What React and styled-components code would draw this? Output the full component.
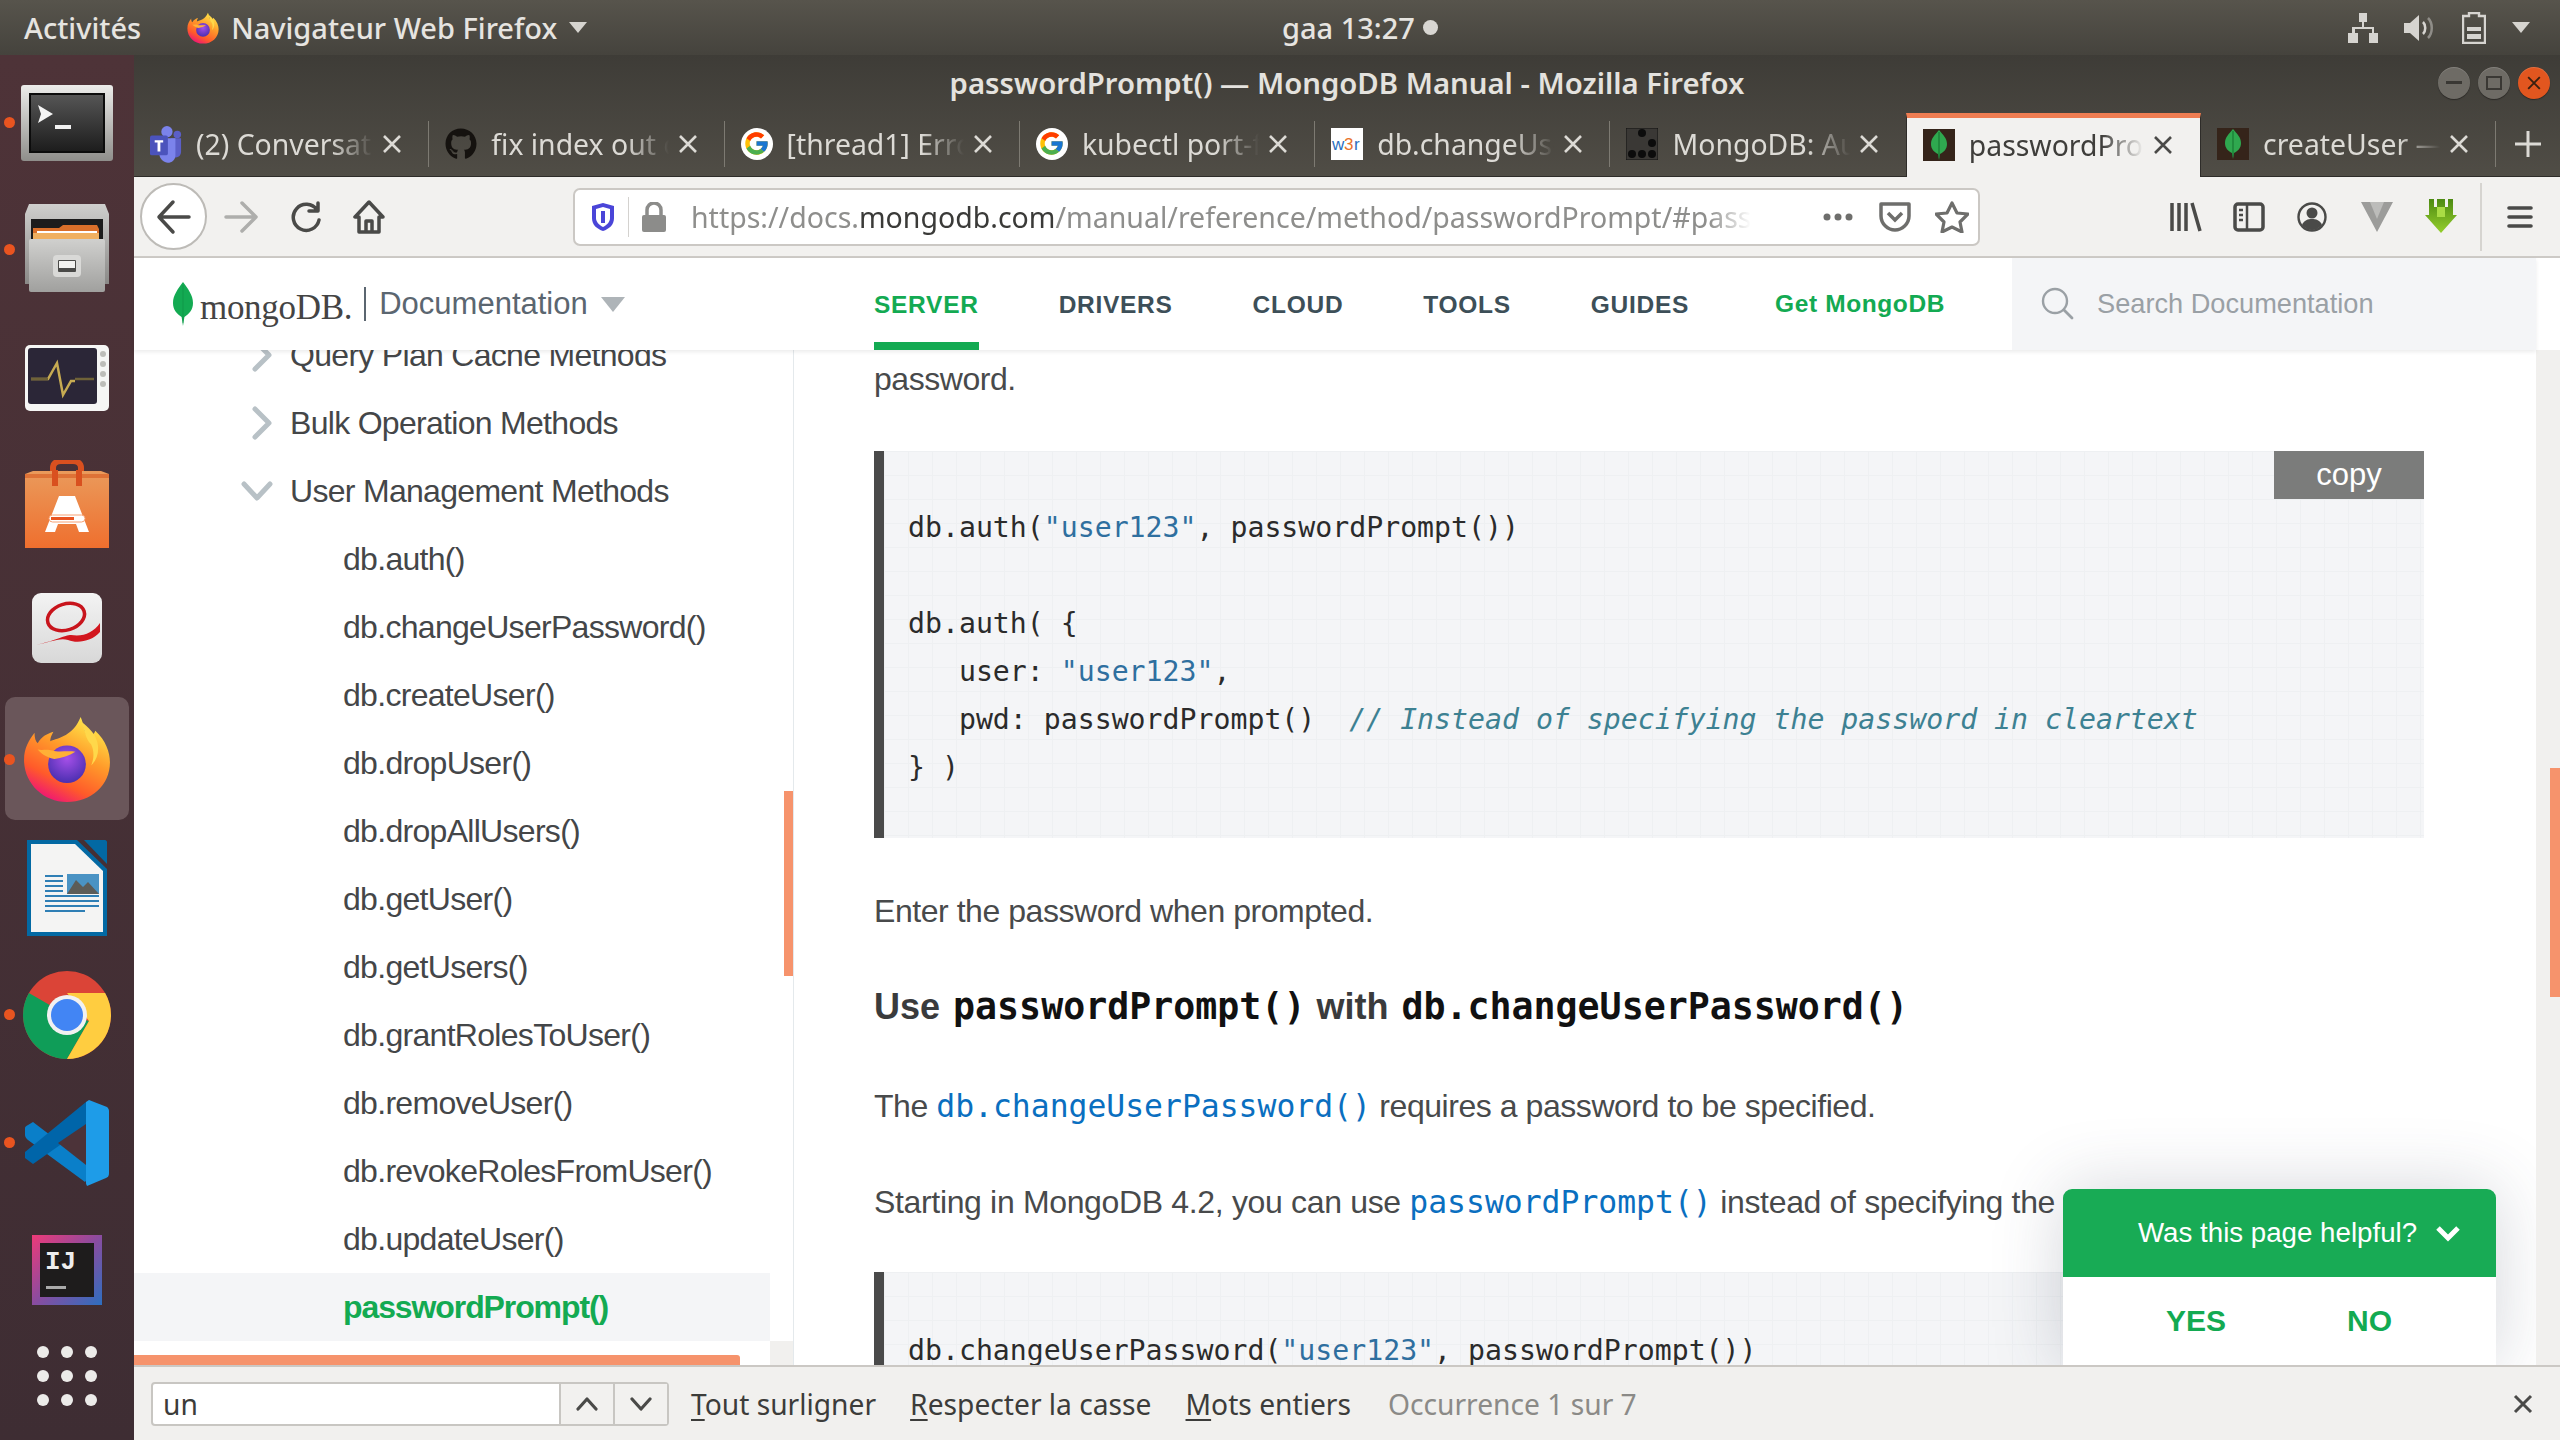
import styled, { createGlobalStyle } from "styled-components";
import { FaGithub } from "react-icons/fa";
import { FcGoogle } from "react-icons/fc";

const UI_FONT = `"Noto Sans", "DejaVu Sans", sans-serif`;
const PAGE_FONT = `"Liberation Sans", Arial, sans-serif`;
const MONO_FONT = `"DejaVu Sans Mono", "Liberation Mono", monospace`;

const GlobalStyle = createGlobalStyle`
  html, body {
    margin: 0;
    padding: 0;
    width: 2560px;
    height: 1440px;
    overflow: hidden;
    background: #fff;
  }
  * {
    box-sizing: border-box;
  }
`;

const Screen = styled.div`
  width: 2560px;
  height: 1440px;
  display: flex;
  flex-direction: column;
  overflow: hidden;
`;

/* ---------- gnome top bar ---------- */

const TopBar = styled.div`
  height: 55px;
  flex: none;
  display: grid;
  grid-template-columns: 1282px auto 1fr;
  align-items: center;
  background: linear-gradient(#57544c, #45433d);
  color: #e6e4e0;
  font-family: ${UI_FONT};
  font-size: 29px;
  font-weight: 500;
`;

const TopLeft = styled.div`
  display: flex;
  align-items: center;
  padding-left: 24px;
`;

const AppMenu = styled.div`
  display: flex;
  align-items: center;
  gap: 12px;
  margin-left: 46px;
`;

const Caret = styled.span`
  width: 0;
  height: 0;
  border-left: ${(p) => p.$size || 9}px solid transparent;
  border-right: ${(p) => p.$size || 9}px solid transparent;
  border-top: ${(p) => (p.$size ? p.$size + 3 : 11)}px solid ${(p) => p.$color || "#d6d4cf"};
`;

const Clock = styled.div`
  display: flex;
  align-items: center;
  gap: 8px;
`;

const Dot = styled.span`
  width: 15px;
  height: 15px;
  border-radius: 50%;
  background: #d8d6d2;
`;

const TopRight = styled.div`
  display: flex;
  align-items: center;
  justify-content: flex-end;
  gap: 26px;
  padding-right: 30px;
`;

/* ---------- dock ---------- */

const Main = styled.div`
  flex: 1;
  min-height: 0;
  display: flex;
`;

const Dock = styled.div`
  width: 134px;
  flex: none;
  padding-top: 4px;
  display: flex;
  flex-direction: column;
  background: linear-gradient(#4e3338, #3e2d33);
`;

const DockCell = styled.div`
  position: relative;
  flex: none;
  height: 127.5px;
  padding-bottom: ${(p) => p.$up || 0}px;
  display: flex;
  align-items: center;
  justify-content: center;
  &::before {
    content: "";
    display: ${(p) => (p.$running ? "block" : "none")};
    position: absolute;
    left: 4px;
    top: 50%;
    width: 11px;
    height: 11px;
    margin-top: -6px;
    border-radius: 50%;
    background: #e95420;
  }
`;

const DockActive = styled.div`
  width: 124px;
  height: 123px;
  display: flex;
  align-items: center;
  justify-content: center;
  border-radius: 10px;
  background: #6a565a;
`;

const DockGrid = styled.div`
  flex: none;
  height: 84px;
  display: grid;
  grid-template-columns: repeat(3, 12px);
  grid-auto-rows: 12px;
  gap: 12px;
  align-content: center;
  justify-content: center;
  span {
    border-radius: 50%;
    background: #ecebe9;
  }
`;

/* ---------- firefox window ---------- */

const Window = styled.div`
  flex: 1;
  min-width: 0;
  display: flex;
  flex-direction: column;
`;

const Chrome = styled.div`
  flex: none;
  height: 122px;
  background: linear-gradient(#3e3c37, #504d46);
  display: flex;
  flex-direction: column;
`;

const TitleRow = styled.div`
  height: 56px;
  flex: none;
  position: relative;
  display: flex;
  align-items: center;
  justify-content: center;
  color: #e4e2de;
  font-family: ${UI_FONT};
  font-size: 29.3px;
  font-weight: 600;
`;

const WindowButtons = styled.div`
  position: absolute;
  right: 10px;
  top: 12px;
  display: flex;
  gap: 8px;
`;

const WindowButton = styled.div`
  width: 32px;
  height: 32px;
  border-radius: 50%;
  display: flex;
  align-items: center;
  justify-content: center;
  background: ${(p) => (p.$close ? "#e2561f" : "#6e6b65")};
  box-shadow: inset 0 1px 0 rgba(255, 255, 255, 0.15), 0 1px 1px #2c2a27;
`;

const TabStrip = styled.div`
  flex: 1;
  display: flex;
  border-bottom: 1px solid #2e2c29;
`;

const Tab = styled.div`
  position: relative;
  flex: none;
  width: 295.3px;
  display: flex;
  align-items: center;
  padding: 0 26px 0 16px;
  color: ${(p) => (p.$active ? "#3f3e3b" : "#dcdad5")};
  background: ${(p) => (p.$active ? "#f2f1ef" : "transparent")};
  font-family: ${UI_FONT};
  font-size: 28.4px;
  ${(p) =>
    p.$active
      ? `
    margin-top: 2px;
    margin-bottom: -1px;
    padding-bottom: 6px;
    border: 1px solid #2e2c29;
    border-bottom: none;
    border-top: 5px solid #ef7d52;
  `
      : `
    &::after {
      content: "";
      display: ${p.$noSep ? "none" : "block"};
      position: absolute;
      right: 0;
      top: 10px;
      bottom: 9px;
      width: 1px;
      background: #7d7a72;
    }
  `}
`;

const TabIcon = styled.span`
  flex: none;
  width: 32px;
  height: 32px;
  display: flex;
  align-items: center;
  justify-content: center;
`;

const GoogleBadge = styled.span`
  width: 32px;
  height: 32px;
  border-radius: 50%;
  background: #fff;
  display: flex;
  align-items: center;
  justify-content: center;
`;

const TabLabel = styled.span`
  flex: 1;
  min-width: 0;
  margin: 0 8px 0 14px;
  white-space: nowrap;
  overflow: hidden;
  -webkit-mask-image: linear-gradient(to right, #000 76%, transparent 100%);
  mask-image: linear-gradient(to right, #000 76%, transparent 100%);
`;

const NewTab = styled.div`
  flex: 1;
  display: flex;
  align-items: center;
  justify-content: center;
`;

const Toolbar = styled.div`
  flex: none;
  height: 81px;
  display: flex;
  align-items: center;
  background: #f2f1ef;
  border-bottom: 2px solid #cdcac6;
`;

const BackButton = styled.div`
  width: 67px;
  height: 67px;
  margin-left: 6px;
  border-radius: 50%;
  background: #fff;
  border: 2px solid #bdbbb7;
  display: flex;
  align-items: center;
  justify-content: center;
`;

const ToolIcon = styled.div`
  flex: none;
  width: ${(p) => p.$w || 63}px;
  display: flex;
  align-items: center;
  justify-content: center;
`;

const UrlBar = styled.div`
  width: 1407px;
  height: 58px;
  margin-left: 173px;
  flex: none;
  display: flex;
  align-items: center;
  background: #fff;
  border: 2px solid #cbc8c4;
  border-radius: 7px;
  font-family: ${UI_FONT};
  font-size: 28.5px;
  color: #8e8e8c;
`;

const UrlDivider = styled.span`
  width: 1px;
  height: 40px;
  background: #d4d2cf;
  margin: 0 12px 0 13px;
`;

const UrlText = styled.div`
  width: 1060px;
  flex: none;
  margin-left: 24px;
  white-space: nowrap;
  overflow: hidden;
  -webkit-mask-image: linear-gradient(to right, #000 96%, transparent 100%);
  mask-image: linear-gradient(to right, #000 96%, transparent 100%);
  b {
    font-weight: 400;
    color: #3a3a38;
  }
`;

const UrlActions = styled.div`
  display: flex;
  align-items: center;
  margin-left: 72px;
  gap: 24px;
`;

const ToolRight = styled.div`
  display: flex;
  align-items: center;
  margin-left: 190px;
  gap: 28px;
`;

const ToolDivider = styled.span`
  width: 2px;
  height: 68px;
  background: #d6d4d0;
  margin: 0 -3px 0 -5px;
`;

/* ---------- mongodb page ---------- */

const Page = styled.div`
  position: relative;
  flex: 1;
  min-height: 0;
  display: flex;
  flex-direction: column;
  background: #fff;
`;

const Header = styled.div`
  position: relative;
  z-index: 3;
  flex: none;
  height: 92px;
  display: flex;
  align-items: stretch;
  margin-right: 24px;
  background: #fff;
  box-shadow: 0 2px 4px rgba(0, 0, 0, 0.08);
`;

const Logo = styled.div`
  width: 740px;
  flex: none;
  display: flex;
  align-items: center;
  padding-left: 39px;
  color: #5b6670;
`;

const LogoWord = styled.span`
  margin-left: 7px;
  font-family: "Liberation Serif", serif;
  font-size: 35px;
  color: #444;
  position: relative;
  top: 4px;
  letter-spacing: -0.3px;
`;

const LogoDivider = styled.span`
  width: 2px;
  height: 34px;
  background: #5b6670;
  margin: 0 13px 0 12px;
`;

const LogoDocs = styled.span`
  font-family: ${PAGE_FONT};
  font-size: 31px;
  margin-right: 13px;
`;

const Nav = styled.div`
  display: flex;
  align-items: stretch;
  gap: 80px;
`;

const NavItem = styled.div`
  display: flex;
  align-items: center;
  padding-top: 2px;
  border-bottom: 8px solid ${(p) => (p.$active ? "#13aa52" : "transparent")};
  border-top: 8px solid transparent;
  font-family: ${PAGE_FONT};
  font-size: 24.5px;
  font-weight: 700;
  letter-spacing: 0.72px;
  color: ${(p) => (p.$green ? "#13aa52" : "#3d4f58")};
`;

const GetMongo = styled(NavItem)`
  margin-left: 6px;
  letter-spacing: 0.6px;
  padding-bottom: 3px;
`;

const Search = styled.div`
  margin-left: 67px;
  flex: 1;
  display: flex;
  align-items: center;
  padding-left: 28px;
  gap: 21px;
  background: #f4f5f7;
  font-family: ${PAGE_FONT};
  font-size: 27.2px;
  color: #9aa0a5;
`;

const Body = styled.div`
  flex: 1;
  min-height: 0;
  display: flex;
`;

const Sidebar = styled.div`
  position: relative;
  width: 660px;
  flex: none;
  overflow: hidden;
  border-right: 1px solid #e4e9ec;
  font-family: ${PAGE_FONT};
  font-size: 32px;
  letter-spacing: -0.7px;
  color: #444648;
`;

const NavList = styled.div`
  margin-top: -29px;
  width: 636px;
`;

const SideRow = styled.div`
  height: 68px;
  display: flex;
  align-items: center;
  position: relative;
  padding-left: ${(p) => (p.$level === 2 ? 209 : 156)}px;
  background: ${(p) => (p.$active ? "#f4f5f7" : "transparent")};
  color: ${(p) => (p.$active ? "#13aa52" : "inherit")};
  font-weight: ${(p) => (p.$active ? 700 : 400)};
  letter-spacing: ${(p) => (p.$active ? "-1.1px" : "inherit")};
`;

const Chevron = styled.span`
  position: absolute;
  left: 107px;
  top: 50%;
  transform: translateY(-50%);
  display: flex;
`;

const SideScrollV = styled.div`
  position: absolute;
  right: 0;
  top: 441px;
  width: 9px;
  height: 185px;
  background: #f6936c;
`;

const SideCorner = styled.div`
  position: absolute;
  right: 0;
  bottom: 0;
  width: 23px;
  height: 24px;
  background: #f1f0ee;
`;

const SideScrollH = styled.div`
  position: absolute;
  left: 0;
  bottom: 0;
  width: 606px;
  height: 10px;
  border-top-right-radius: 3px;
  background: #f6936c;
`;

const Content = styled.div`
  position: relative;
  flex: 1;
  min-width: 0;
  overflow: hidden;
  padding: 7px 0 0 80px;
  font-family: ${PAGE_FONT};
  font-size: 32px;
  letter-spacing: -0.45px;
  color: #484a4b;
`;

const Para = styled.p`
  margin: 0 0 ${(p) => p.$after || 0}px;
  line-height: 44px;
  letter-spacing: ${(p) => p.$spacing || "inherit"};
  white-space: nowrap;
`;

const Heading = styled.h3`
  margin: 0 0 53px;
  line-height: 48px;
  font-size: 36px;
  font-weight: 700;
  color: #3a3b3c;
  letter-spacing: 0;
  white-space: nowrap;
  code {
    margin: 0 1px 0 3px;
    font-family: ${MONO_FONT};
    font-weight: 700;
    font-size: 36.6px;
    color: #111;
  }
`;

const InlineLink = styled.a`
  font-family: ${MONO_FONT};
  font-size: 31.4px;
  color: #0a6fc0;
  text-decoration: none;
  letter-spacing: 0;
`;

const CodeBlock = styled.div`
  position: relative;
  width: 1550px;
  height: ${(p) => p.$height}px;
  margin: ${(p) => p.$top}px 0 ${(p) => p.$after || 0}px;
  padding: ${(p) => p.$pad}px 0 0 24px;
  border-left: 10px solid #4a4a4a;
  background-color: #f4f5f7;
  background-image:
    linear-gradient(to right, #eef0f2 1px, transparent 1px),
    linear-gradient(to bottom, #eef0f2 1px, transparent 1px);
  background-size: 24px 24px;
  font-family: ${MONO_FONT};
  font-size: 28.2px;
  letter-spacing: 0;
  line-height: 48px;
  color: #2b2b2b;
  white-space: pre;
`;

const CopyButton = styled.div`
  position: absolute;
  top: 0;
  right: 0;
  width: 150px;
  height: 48px;
  display: flex;
  align-items: center;
  justify-content: center;
  background: #7b7c7b;
  font-family: ${PAGE_FONT};
  font-size: 31px;
  color: #fff;
`;

const Str = styled.span`
  color: #2f6f9f;
`;

const Comment = styled.span`
  color: #3d8192;
  font-style: italic;
`;

const PageGutter = styled.div`
  position: relative;
  width: 24px;
  flex: none;
  background: #f1f0ee;
`;

const PageThumb = styled.div`
  position: absolute;
  right: 0;
  top: 418px;
  width: 10px;
  height: 229px;
  background: #f6936c;
`;

const Feedback = styled.div`
  position: absolute;
  z-index: 4;
  top: 839px;
  left: 1269px;
  width: 433px;
  height: 177px;
  border-radius: 9px 9px 0 0;
  background: #fff;
  box-shadow: 0 0 70px rgba(60, 70, 90, 0.22);
  font-family: ${PAGE_FONT};
  letter-spacing: 0;
`;

const FeedbackHead = styled.div`
  height: 88px;
  display: flex;
  align-items: center;
  padding-left: 75px;
  gap: 18px;
  border-radius: 9px 9px 0 0;
  background: #18ab55;
  color: #fff;
  font-size: 27.7px;
`;

const FeedbackBody = styled.div`
  height: 88px;
  display: flex;
  align-items: center;
  padding-left: 103px;
  gap: 121px;
  color: #13aa52;
  font-size: 30px;
  font-weight: 700;
`;

/* ---------- find bar ---------- */

const FindBar = styled.div`
  flex: none;
  height: 75px;
  display: flex;
  align-items: center;
  padding-left: 17px;
  background: #f1f0ee;
  border-top: 2px solid #cbc8c4;
  font-family: ${UI_FONT};
  font-size: 28.2px;
  color: #3c3c3a;
  position: relative;
`;

const FindInput = styled.div`
  width: 518px;
  height: 44px;
  flex: none;
  display: flex;
  border: 2px solid #c8c6c2;
  border-radius: 4px;
  background: #fff;
`;

const FindValue = styled.div`
  flex: 1;
  display: flex;
  align-items: center;
  padding-left: 10px;
`;

const FindStep = styled.div`
  width: 54px;
  flex: none;
  display: flex;
  align-items: center;
  justify-content: center;
  border-left: 2px solid #c8c6c2;
  background: #f2f1ef;
`;

const FindLabel = styled.span`
  margin-left: ${(p) => p.$gap}px;
  color: ${(p) => (p.$muted ? "#8b8a87" : "inherit")};
  white-space: nowrap;
  u {
    text-underline-offset: 4px;
  }
`;

const FindClose = styled.div`
  margin-left: auto;
  margin-right: 26px;
  display: flex;
`;

/* ---------- drawings ---------- */

const Leaf = ({ w = 20, h = 44, fill = "#13aa52" }) => (
  <svg width={w} height={h} viewBox="0 0 20 44">
    <path d="M10 0C5 7 0 13 0 21c0 7 4 11 8.6 14L10 44l1.4-9C16 32 20 28 20 21 20 13 15 7 10 0z" fill={fill} />
    <path d="M10 3v38" stroke="#0d7f3d" strokeWidth="0.8" opacity="0.5" />
  </svg>
);

const MongoFav = () => (
  <svg width="32" height="32" viewBox="0 0 32 32">
    <rect width="32" height="32" fill="#35241a" />
    <path d="M16 1c-4 5-8 8-8 14 0 5 3 8 7 10l1 6 1-6c4-2 7-5 7-10 0-6-4-9-8-14z" fill="#2fa84f" />
    <path d="M16 3v25" stroke="#14702f" strokeWidth="1" />
  </svg>
);

const TeamsFav = () => (
  <svg width="34" height="40" viewBox="0 0 34 40">
    <circle cx="18" cy="7" r="6" fill="#7b83eb" />
    <circle cx="29" cy="10" r="4" fill="#5b5fc7" />
    <path d="M22 14h11v14c0 5-4 7-7 6z" fill="#5b5fc7" />
    <path d="M10 14h17v18c0 5-4 8-8 8s-9-4-9-9z" fill="#7b83eb" />
    <rect x="0" y="11" width="19" height="21" rx="2" fill="#4b53bc" />
    <path d="M5 16h9v2.5h-3V28H8v-9.5H5z" fill="#fff" />
  </svg>
);

const W3Fav = () => (
  <svg width="32" height="32" viewBox="0 0 32 32">
    <rect width="32" height="32" fill="#fff" />
    <text x="1" y="22" fontFamily="Liberation Sans, sans-serif" fontSize="17" fill="#2b6fc0">w</text>
    <text x="13" y="22" fontFamily="Liberation Sans, sans-serif" fontSize="17" fill="#e8722c">3</text>
    <text x="23" y="22" fontFamily="Liberation Sans, sans-serif" fontSize="17" fill="#2b6fc0">r</text>
  </svg>
);

const MongoAuFav = () => (
  <svg width="32" height="32" viewBox="0 0 32 32">
    <rect width="32" height="32" fill="#3a3835" stroke="#111" />
    <circle cx="16" cy="5" r="4" fill="#0c0c0c" />
    <circle cx="26" cy="15" r="4" fill="#0c0c0c" />
    <circle cx="6" cy="26" r="4" fill="#0c0c0c" />
    <circle cx="16" cy="26" r="4" fill="#0c0c0c" />
    <circle cx="26" cy="26" r="4" fill="#0c0c0c" />
  </svg>
);

const FirefoxIcon = ({ size = 84 }) => (
  <svg width={size} height={size} viewBox="0 0 84 84">
    <defs>
      <linearGradient id={`ffA${size}`} x1="0.8" y1="0.05" x2="0.3" y2="1">
        <stop offset="0" stopColor="#ffe94a" />
        <stop offset="0.4" stopColor="#ff9a2a" />
        <stop offset="0.75" stopColor="#ff5a2a" />
        <stop offset="1" stopColor="#ee1279" />
      </linearGradient>
      <radialGradient id={`ffB${size}`} cx="0.5" cy="0.35" r="0.65">
        <stop offset="0" stopColor="#a54fe8" />
        <stop offset="1" stopColor="#4a2fb0" />
      </radialGradient>
    </defs>
    <path d="M55 2c4 9 2 13 8 20 3-2 5-4 6-7 10 9 14 21 14 30 0 22-18 38-41 38S1 65 1 43C1 31 6 24 11 17c0 5 1 8 3 10 4-7 9-9 15-11-2 4-3 6-3 9 8-3 22-5 29-23z" fill={`url(#ffA${size})`} />
    <circle cx="42" cy="47" r="18" fill={`url(#ffB${size})`} />
    <path d="M14 33c6 1 9-1 14 1 6 2 13 0 22 1-6 4-13 6-20 7-6-1-12-4-16-9z" fill="#ffb036" />
    <path d="M55 6c5 10 4 16 10 22 3 6 3 14 0 20 6-5 8-14 6-22-2-8-8-14-16-20z" fill="#ffd84a" />
  </svg>
);

const Terminal = () => (
  <svg width="92" height="76" viewBox="0 0 92 76">
    <defs>
      <linearGradient id="termBody" x1="0" y1="0" x2="0" y2="1">
        <stop offset="0" stopColor="#ececea" />
        <stop offset="1" stopColor="#8f8e8b" />
      </linearGradient>
      <linearGradient id="termScreen" x1="0" y1="0" x2="0" y2="1">
        <stop offset="0" stopColor="#555" />
        <stop offset="1" stopColor="#1d1d1d" />
      </linearGradient>
    </defs>
    <rect width="92" height="76" rx="3" fill="url(#termBody)" />
    <rect x="8" y="8" width="76" height="60" fill="#0c0c0c" />
    <rect x="10" y="10" width="72" height="56" fill="url(#termScreen)" />
    <path d="M17 20l15 9-15 9 3-9z" fill="#f4f4f4" />
    <rect x="34" y="40" width="16" height="4" fill="#f0f0f0" />
  </svg>
);

const Cabinet = () => (
  <svg width="84" height="88" viewBox="0 0 84 88">
    <defs>
      <linearGradient id="cabTop" x1="0" y1="0" x2="0" y2="1">
        <stop offset="0" stopColor="#cfcfcd" />
        <stop offset="1" stopColor="#8a8987" />
      </linearGradient>
      <linearGradient id="cabFront" x1="0" y1="0" x2="0" y2="1">
        <stop offset="0" stopColor="#d0d0ce" />
        <stop offset="1" stopColor="#a0a09e" />
      </linearGradient>
    </defs>
    <path d="M4 0h76l4 10v70H0V10z" fill="url(#cabTop)" />
    <rect x="6" y="15" width="72" height="30" fill="#1c1c1c" />
    <path d="M8 24h26l4-3h34l2 4v16H8z" fill="#d96f2a" />
    <rect x="8" y="29" width="66" height="14" fill="#f0b060" />
    <rect x="12" y="27" width="60" height="2" fill="#fff" />
    <rect x="4" y="35" width="76" height="53" rx="2" fill="url(#cabFront)" />
    <rect x="28" y="51" width="28" height="22" rx="4" fill="#d9d9d7" />
    <rect x="33" y="56" width="18" height="12" rx="1" fill="#4a4a48" />
    <rect x="34" y="57" width="16" height="7" fill="#f2f2f0" />
  </svg>
);

const Monitor = () => (
  <svg width="84" height="66" viewBox="0 0 84 66">
    <rect width="84" height="66" rx="5" fill="#f6f6f5" />
    <rect x="3" y="3" width="69" height="56" rx="3" fill="#2b2637" />
    <path d="M6 34h17l9-16 6 32 8-14h4" fill="none" stroke="#c7ab52" strokeWidth="2.5" />
    <path d="M6 34h17" stroke="#6f6238" strokeWidth="2.5" />
    <path d="M50 34h19" stroke="#6f6238" strokeWidth="2.5" />
    <circle cx="78" cy="9" r="3" fill="#bdbdb9" />
    <circle cx="78" cy="19" r="3" fill="#bdbdb9" />
    <circle cx="78" cy="29" r="3" fill="#bdbdb9" />
    <circle cx="78" cy="39" r="3" fill="#bdbdb9" />
  </svg>
);

const Store = () => (
  <svg width="84" height="90" viewBox="0 0 84 90">
    <defs>
      <linearGradient id="bag" x1="0" y1="0" x2="0" y2="1">
        <stop offset="0" stopColor="#ea9a5b" />
        <stop offset="1" stopColor="#ef6f2e" />
      </linearGradient>
    </defs>
    <path d="M28 14V8c0-5 4-7 8-7h12c4 0 8 2 8 7v6" fill="none" stroke="#d9501f" strokeWidth="6" />
    <path d="M0 14l8-3h68l8 3v74H0z" fill="url(#bag)" />
    <path d="M0 14h84v4H0z" fill="#d9622a" opacity="0.7" />
    <rect x="27" y="10" width="6" height="16" fill="#d9501f" />
    <rect x="51" y="10" width="6" height="16" fill="#d9501f" />
    <path d="M34 36h16l14 36h-10l-3-8H33l-3 8H20z" fill="#fff" />
    <rect x="24" y="55" width="36" height="7" rx="3.5" fill="#fff" stroke="#f7a072" />
    <rect x="26" y="57" width="23" height="3" fill="#e95420" />
  </svg>
);

const MailIcon = () => (
  <svg width="70" height="70" viewBox="0 0 70 70">
    <defs>
      <linearGradient id="mailBg" x1="0" y1="0" x2="0" y2="1">
        <stop offset="0" stopColor="#f3f3f3" />
        <stop offset="1" stopColor="#d8d8d8" />
      </linearGradient>
    </defs>
    <rect width="70" height="70" rx="9" fill="url(#mailBg)" />
    <ellipse cx="34" cy="24" rx="19" ry="13" fill="none" stroke="#c8141c" strokeWidth="3.5" transform="rotate(-18 34 24)" />
    <path d="M3 52c20-4 30-10 36-10 12 2 22-2 29-12v9c-8 9-22 12-32 8-8-3-20 3-33 5z" fill="#d2161e" />
  </svg>
);

const WriterIcon = () => (
  <svg width="80" height="96" viewBox="0 0 80 96">
    <path d="M0 0h50l30 29v67H0z" fill="#0369a3" />
    <path d="M57 0h21c1 0 2 1 2 2v22z" fill="#0369a3" />
    <path d="M4 4h44l28 27v61H4z" fill="#f4f4f3" />
    <rect x="40" y="34" width="32" height="20" fill="#4a93c4" />
    <path d="M40 54l9-14 7 7 5-5 11 12z" fill="#5c5c58" />
    <path d="M18 36h18M18 41h18M18 46h18M18 51h18M18 56h54M18 61h54M18 66h54M18 71h40" stroke="#2f7fb5" strokeWidth="2.2" />
  </svg>
);

const ChromeIcon = () => (
  <svg width="88" height="88" viewBox="0 0 88 88">
    <circle cx="44" cy="44" r="44" fill="#db4437" />
    <path d="M44 44L5.9 22A44 44 0 0 0 44 88l22-38z" fill="#0f9d58" />
    <path d="M44 22h38.1A44 44 0 0 1 44 88l22-38z" fill="#ffcd40" />
    <circle cx="44" cy="44" r="20" fill="#f1f1f1" />
    <circle cx="44" cy="44" r="16" fill="#4285f4" />
  </svg>
);

const VsCode = () => (
  <svg width="84" height="86" viewBox="0 0 84 86">
    <path d="M0 28c0-1 1-2 3-3l5-3 55 42v14L60 82 3 40C1 38 0 37 0 35z" fill="#0a7fc9" />
    <path d="M8 64L0 58v-6l61-50 4 8v14z" fill="#0065a9" />
    <path d="M61 2l3-2 18 7c1 1 2 2 2 4v62c0 3-1 4-3 5l-19 8c-1-2-1-2-1-4z" fill="#1e9ce8" />
    <path d="M61 24v41L33 43z" fill="#4c3339" />
  </svg>
);

const IjIcon = () => (
  <svg width="70" height="70" viewBox="0 0 70 70">
    <defs>
      <linearGradient id="ijBg" x1="0" y1="0" x2="1" y2="1">
        <stop offset="0" stopColor="#ee3a78" />
        <stop offset="0.5" stopColor="#8a4ca0" />
        <stop offset="1" stopColor="#2d6fc0" />
      </linearGradient>
    </defs>
    <rect width="70" height="70" fill="url(#ijBg)" />
    <rect x="8" y="8" width="54" height="54" fill="#1e1c1c" />
    <text x="13" y="34" fontFamily="Liberation Mono, monospace" fontWeight="700" fontSize="26" fill="#eee">IJ</text>
    <rect x="14" y="51" width="20" height="3" fill="#aaa" />
  </svg>
);

const CloseX = ({ color = "#dcdad5", size = 22, width = 2.6 }) => (
  <svg width={size} height={size} viewBox="0 0 22 22">
    <path d="M3 3l16 16M19 3L3 19" stroke={color} strokeWidth={width} fill="none" />
  </svg>
);

const Stroke = ({ w, h, color = "#4a4a48", sw = 3, d, fill = "none" }) => (
  <svg width={w} height={h} viewBox={`0 0 ${w} ${h}`}>
    <path d={d} stroke={color} strokeWidth={sw} fill={fill} strokeLinecap="round" strokeLinejoin="round" />
  </svg>
);

const GoogleFav = () => (
  <GoogleBadge>
    <FcGoogle size={27} />
  </GoogleBadge>
);

/* ---------- data ---------- */

const tabs = [
  { label: "(2) Conversations", icon: <TeamsFav /> },
  { label: "fix index out of", icon: <FaGithub size={32} color="#15120f" /> },
  { label: "[thread1] Error", icon: <GoogleFav /> },
  { label: "kubectl port-forward", icon: <GoogleFav /> },
  { label: "db.changeUserPass", icon: <W3Fav /> },
  { label: "MongoDB: Auth", icon: <MongoAuFav />, noSep: true },
  { label: "passwordPrompt", icon: <MongoFav />, active: true, noSep: true },
  { label: "createUser — ", icon: <MongoFav /> },
];

const methods = [
  "db.auth()",
  "db.changeUserPassword()",
  "db.createUser()",
  "db.dropUser()",
  "db.dropAllUsers()",
  "db.getUser()",
  "db.getUsers()",
  "db.grantRolesToUser()",
  "db.removeUser()",
  "db.revokeRolesFromUser()",
  "db.updateUser()",
];

const chevronRight = (
  <Stroke w={32} h={36} color="#b8c1c6" sw={5} d="M14 4l14 14-14 14" />
);
const chevronDown = (
  <Stroke w={32} h={24} color="#b8c1c6" sw={5} d="M3 5l13 14 13-14" />
);

const App = () => (
  <Screen>
    <GlobalStyle />
    <TopBar>
      <TopLeft>
        <span>Activités</span>
        <AppMenu>
          <FirefoxIcon size={32} />
          <span>Navigateur Web Firefox</span>
          <Caret />
        </AppMenu>
      </TopLeft>
      <Clock>
        <span>gaa 13:27</span>
        <Dot />
      </Clock>
      <TopRight>
        <svg width="30" height="30" viewBox="0 0 30 30">
          <path d="M11 0h8v9h-3v5h10v6h4v10h-9V20h3v-4H7v4h3v10H0V20h4v-6h10V9h-3z" fill="#d6d4d0" />
        </svg>
        <svg width="32" height="28" viewBox="0 0 32 28">
          <path d="M0 9h6l9-8v26l-9-8H0z" fill="#d6d4d0" />
          <path d="M19 8c3 3 3 9 0 12" stroke="#d6d4d0" strokeWidth="2.5" fill="none" />
          <path d="M24 4c5 5 5 15 0 20" stroke="#8f8d88" strokeWidth="2.5" fill="none" />
        </svg>
        <svg width="24" height="32" viewBox="0 0 24 32">
          <path d="M7 1h10v3h6v27H1V4h6z" fill="none" stroke="#d6d4d0" strokeWidth="2.4" />
          <rect x="5" y="15" width="14" height="4" fill="#d6d4d0" />
          <rect x="5" y="22" width="14" height="5" fill="#d6d4d0" />
        </svg>
        <Caret />
      </TopRight>
    </TopBar>
    <Main>
      <Dock>
        <DockCell $running><Terminal /></DockCell>
        <DockCell $running $up={4}><Cabinet /></DockCell>
        <DockCell><Monitor /></DockCell>
        <DockCell><Store /></DockCell>
        <DockCell $up={10}><MailIcon /></DockCell>
        <DockCell $running $up={3}><DockActive><FirefoxIcon size={88} /></DockActive></DockCell>
        <DockCell><WriterIcon /></DockCell>
        <DockCell $running><ChromeIcon /></DockCell>
        <DockCell $running><VsCode /></DockCell>
        <DockCell><IjIcon /></DockCell>
        <DockGrid>
          {Array.from({ length: 9 }, (_, i) => <span key={i} />)}
        </DockGrid>
      </Dock>
      <Window>
        <Chrome>
          <TitleRow>
            passwordPrompt() — MongoDB Manual - Mozilla Firefox
            <WindowButtons>
              <WindowButton>
                <svg width="16" height="4"><rect width="16" height="3" fill="#3a3834" /></svg>
              </WindowButton>
              <WindowButton>
                <svg width="16" height="14"><rect x="1" y="1" width="14" height="12" fill="none" stroke="#3a3834" strokeWidth="2" /></svg>
              </WindowButton>
              <WindowButton $close><CloseX color="#3a2010" size={16} /></WindowButton>
            </WindowButtons>
          </TitleRow>
          <TabStrip>
            {tabs.map((t) => (
              <Tab key={t.label} $active={t.active} $noSep={t.noSep}>
                <TabIcon>{t.icon}</TabIcon>
                <TabLabel>{t.label}</TabLabel>
                <CloseX color={t.active ? "#4a4a48" : "#dcdad5"} size={22} />
              </Tab>
            ))}
            <NewTab>
              <svg width="28" height="28"><path d="M14 1v26M1 14h26" stroke="#dcdad5" strokeWidth="3" /></svg>
            </NewTab>
          </TabStrip>
        </Chrome>
        <Toolbar>
          <BackButton>
            <Stroke w={36} h={36} sw={3.5} d="M33 18H3M17 3L3 18l14 15" />
          </BackButton>
          <ToolIcon $w={67}>
            <Stroke w={34} h={34} color="#aeaeac" sw={3.5} d="M2 17h30M18 3l14 14-14 14" />
          </ToolIcon>
          <ToolIcon $w={63}>
            <Stroke w={32} h={32} sw={3.5} d="M27 9A13 13 0 1 0 29 19M28 2v8h-9" />
          </ToolIcon>
          <ToolIcon $w={63}>
            <svg width="32" height="34" viewBox="0 0 32 34">
              <path d="M16 2L2 17h4v15h20V17h4zM13 32V21h6v11" fill="none" stroke="#4a4a48" strokeWidth="3.5" strokeLinejoin="round" />
            </svg>
          </ToolIcon>
          <UrlBar>
            <svg style={{ marginLeft: 16 }} width="24" height="30" viewBox="0 0 24 30">
              <path d="M12 1l11 3v12c0 7-5 11-11 13C6 27 1 23 1 16V4z" fill="#4a45d8" />
              <path d="M12 5l7 2v9c0 4-3 7-7 9-4-2-7-5-7-9V7z" fill="#fff" />
              <rect x="10" y="9" width="4" height="12" fill="#4a45d8" />
            </svg>
            <UrlDivider />
            <svg width="26" height="30" viewBox="0 0 26 30">
              <path d="M6 13V8a7 7 0 0 1 14 0v5" fill="none" stroke="#8c8c8a" strokeWidth="3.5" />
              <rect x="1" y="13" width="24" height="17" rx="2" fill="#8c8c8a" />
            </svg>
            <UrlText>
              https://docs.<b>mongodb.com</b>/manual/reference/method/passwordPrompt/#passw
            </UrlText>
            <UrlActions>
              <svg width="32" height="8"><circle cx="4" cy="4" r="3.5" fill="#6e6e6c" /><circle cx="15" cy="4" r="3.5" fill="#6e6e6c" /><circle cx="26" cy="4" r="3.5" fill="#6e6e6c" /></svg>
              <svg width="32" height="30" viewBox="0 0 32 30">
                <path d="M2 2h28v12c0 8-7 14-14 14S2 22 2 14z" fill="none" stroke="#6e6e6c" strokeWidth="3.5" strokeLinejoin="round" />
                <path d="M9 11l7 7 7-7" fill="none" stroke="#6e6e6c" strokeWidth="3.5" />
              </svg>
              <svg width="34" height="32" viewBox="0 0 34 32">
                <path d="M17 2l5 10 11 1-8 8 2 10-10-5-10 5 2-10-8-8 11-1z" fill="none" stroke="#6e6e6c" strokeWidth="3.2" strokeLinejoin="round" />
              </svg>
            </UrlActions>
          </UrlBar>
          <ToolRight>
            <svg width="32" height="30" viewBox="0 0 32 30">
              <path d="M2 1v28M9 1v28M16 1v28M22 1l8 28" stroke="#4a4a48" strokeWidth="3.5" fill="none" />
            </svg>
            <svg width="32" height="30" viewBox="0 0 32 30" style={{ marginLeft: 3 }}>
              <rect x="2" y="2" width="28" height="26" rx="3" fill="none" stroke="#4a4a48" strokeWidth="3.5" />
              <path d="M14 2v26M6 8h4M6 13h4M6 18h4" stroke="#4a4a48" strokeWidth="2.5" />
            </svg>
            <svg width="30" height="30" viewBox="0 0 30 30" style={{ marginLeft: 4 }}>
              <circle cx="15" cy="15" r="13.5" fill="none" stroke="#4a4a48" strokeWidth="2.4" />
              <circle cx="15" cy="11" r="5.5" fill="#4a4a48" />
              <path d="M5 23c2-5 6-6 10-6s8 1 10 6c-3 3-6 5-10 5s-7-2-10-5z" fill="#4a4a48" />
            </svg>
            <svg width="32" height="30" viewBox="0 0 32 30" style={{ marginLeft: 6 }}>
              <path d="M0 0h12l4 14 4-14h12L16 30z" fill="#9c9c9a" />
              <path d="M9 0h14l-7 17z" fill="#bcbcba" />
            </svg>
            <svg width="32" height="36" viewBox="0 0 32 36" style={{ marginLeft: 4 }}>
              <defs>
                <linearGradient id="dlArrow" x1="0" y1="0" x2="0" y2="1">
                  <stop offset="0" stopColor="#4d8a12" />
                  <stop offset="1" stopColor="#95cf2c" />
                </linearGradient>
              </defs>
              <path d="M4 0h5v8h3V0h8v8h3V0h5v16h4L16 34 0 16h4z" fill="url(#dlArrow)" />
              <path d="M12 8h8v10h-8z" fill="#a9dc45" />
            </svg>
            <ToolDivider />
            <Stroke w={26} h={26} sw={3.6} d="M2 4h22M2 13h22M2 22h22" />
          </ToolRight>
        </Toolbar>
        <Page>
          <Header>
            <Logo>
              <Leaf />
              <LogoWord>mongoDB.</LogoWord>
              <LogoDivider />
              <LogoDocs>Documentation</LogoDocs>
              <Caret $color="#aeb4b8" $size={12} />
            </Logo>
            <Nav>
              <NavItem $active $green>SERVER</NavItem>
              <NavItem>DRIVERS</NavItem>
              <NavItem>CLOUD</NavItem>
              <NavItem>TOOLS</NavItem>
              <NavItem>GUIDES</NavItem>
              <GetMongo $green>Get MongoDB</GetMongo>
            </Nav>
            <Search>
              <svg width="36" height="36" viewBox="0 0 36 36">
                <circle cx="15" cy="15" r="12" fill="none" stroke="#9aa0a5" strokeWidth="2.4" />
                <path d="M24 24l8 8" stroke="#9aa0a5" strokeWidth="2.8" strokeLinecap="round" />
              </svg>
              <span>Search Documentation</span>
            </Search>
          </Header>
          <Body>
            <Sidebar>
              <NavList>
                <SideRow>
                  <Chevron>{chevronRight}</Chevron>
                  Query Plan Cache Methods
                </SideRow>
                <SideRow>
                  <Chevron>{chevronRight}</Chevron>
                  Bulk Operation Methods
                </SideRow>
                <SideRow>
                  <Chevron>{chevronDown}</Chevron>
                  User Management Methods
                </SideRow>
                {methods.map((m) => (
                  <SideRow key={m} $level={2}>{m}</SideRow>
                ))}
                <SideRow $level={2} $active>passwordPrompt()</SideRow>
              </NavList>
              <SideScrollV />
              <SideCorner />
              <SideScrollH />
            </Sidebar>
            <Content>
              <Para>password.</Para>
              <CodeBlock $top={50} $after={51} $height={387} $pad={53}>
                <CopyButton>copy</CopyButton>
                {`db.auth(`}<Str>"user123"</Str>{`, passwordPrompt())

db.auth( {
   user: `}<Str>"user123"</Str>{`,
   pwd: passwordPrompt()  `}<Comment>// Instead of specifying the password in cleartext</Comment>{`
} )`}
              </CodeBlock>
              <Para $after={50}>Enter the password when prompted.</Para>
              <Heading>Use <code>passwordPrompt()</code> with <code>db.changeUserPassword()</code></Heading>
              <Para $after={52}>
                The <InlineLink>db.changeUserPassword()</InlineLink> requires a password to be specified.
              </Para>
              <Para $spacing="-0.34px">
                Starting in MongoDB 4.2, you can use <InlineLink>passwordPrompt()</InlineLink> instead of specifying the password
              </Para>
              <CodeBlock $top={48} $height={140} $pad={55}>
                {`db.changeUserPassword(`}<Str>"user123"</Str>{`, passwordPrompt())`}
              </CodeBlock>
              <Feedback>
                <FeedbackHead>
                  <span>Was this page helpful?</span>
                  <svg width="26" height="20" viewBox="0 0 26 20">
                    <path d="M3 5l10 10L23 5" stroke="#fff" strokeWidth="5" fill="none" />
                  </svg>
                </FeedbackHead>
                <FeedbackBody>
                  <span>YES</span>
                  <span>NO</span>
                </FeedbackBody>
              </Feedback>
            </Content>
            <PageGutter><PageThumb /></PageGutter>
          </Body>
          <FindBar>
            <FindInput>
              <FindValue>un</FindValue>
              <FindStep><Stroke w={24} h={14} sw={3.2} d="M3 12L12 2l9 10" /></FindStep>
              <FindStep><Stroke w={24} h={14} sw={3.2} d="M3 2l9 10 9-10" /></FindStep>
            </FindInput>
            <FindLabel $gap={22}><u>T</u>out surligner</FindLabel>
            <FindLabel $gap={34}><u>R</u>especter la casse</FindLabel>
            <FindLabel $gap={34}><u>M</u>ots entiers</FindLabel>
            <FindLabel $gap={37} $muted>Occurrence 1 sur 7</FindLabel>
            <FindClose><CloseX color="#4a4a48" size={22} width={3} /></FindClose>
          </FindBar>
        </Page>
      </Window>
    </Main>
  </Screen>
);

export default App;
